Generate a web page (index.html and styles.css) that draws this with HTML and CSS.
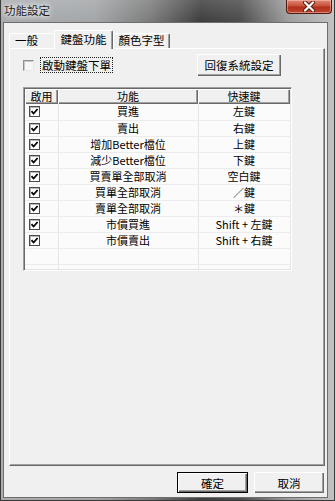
FILE: index.html
```html
<!DOCTYPE html>
<html lang="zh-Hant">
<head>
<meta charset="utf-8">
<title>功能設定</title>
<link rel="stylesheet" href="styles.css">
</head>
<body>
<div class="window">
  <div class="titlebar">
    <span class="title">功能設定</span>
    <button class="close" aria-label="close">
      <svg width="14" height="11" viewBox="0 0 14 11">
        <path d="M3 1.5 L11 9.5 M11 1.5 L3 9.5" stroke="#5a1a10" stroke-width="4" stroke-linecap="round"/>
        <path d="M3 1.5 L11 9.5 M11 1.5 L3 9.5" stroke="#ffffff" stroke-width="2.2" stroke-linecap="round"/>
      </svg>
    </button>
  </div>
  <div class="client">
    <div class="tabs">
      <div class="tab first">一般</div>
      <div class="tab active">鍵盤功能</div>
      <div class="tab">顏色字型</div>
    </div>
    <div class="panel">
      <div class="options">
        <span class="cb"></span>
        <span class="focus">啟動鍵盤下單</span>
        <button class="btn restore">回復系統設定</button>
      </div>
      <div class="list">
        <table class="grid">
          <colgroup><col class="c1"><col class="c2"><col class="c3"></colgroup>
          <thead>
            <tr><th>啟用</th><th>功能</th><th>快速鍵</th></tr>
          </thead>
          <tbody>
            <tr><td><span class="chk"></span></td><td>買進</td><td>左鍵</td></tr>
            <tr><td><span class="chk"></span></td><td>賣出</td><td>右鍵</td></tr>
            <tr><td><span class="chk"></span></td><td>增加Better檔位</td><td>上鍵</td></tr>
            <tr><td><span class="chk"></span></td><td>減少Better檔位</td><td>下鍵</td></tr>
            <tr><td><span class="chk"></span></td><td>買賣單全部取消</td><td>空白鍵</td></tr>
            <tr><td><span class="chk"></span></td><td>買單全部取消</td><td>／鍵</td></tr>
            <tr><td><span class="chk"></span></td><td>賣單全部取消</td><td>＊鍵</td></tr>
            <tr><td><span class="chk"></span></td><td>市價買進</td><td>Shift + 左鍵</td></tr>
            <tr><td><span class="chk"></span></td><td>市價賣出</td><td>Shift + 右鍵</td></tr>
            <tr class="empty"><td></td><td></td><td></td></tr>
            <tr class="empty"><td></td><td></td><td></td></tr>
          </tbody>
        </table>
      </div>
    </div>
    <div class="actions">
      <button class="btn default">確定</button>
      <button class="btn">取消</button>
    </div>
  </div>
</div>
</body>
</html>
```

FILE: styles.css
```css
html, body {
  margin: 0;
  padding: 0;
}
body {
  width: 335px;
  height: 501px;
  overflow: hidden;
  font-family: "Noto Sans CJK TC", "Liberation Sans", sans-serif;
  font-size: 11.5px;
  color: #000;
}
.window {
  width: 335px;
  height: 501px;
  box-sizing: border-box;
  display: flex;
  flex-direction: column;
  padding: 0 6px 2px 2px;
  border-left: 1px solid #3a3a3a;
  border-right: 1px solid #3a3a3a;
  border-bottom: 1px solid #3a3a3a;
  background:
    linear-gradient(180deg, rgba(255,255,255,0.15) 0, rgba(0,0,0,0) 22px),
    linear-gradient(90deg, #a9adb0 0, #a3a6a8 28%, #7b7b7b 45%, #3e3e3e 60%, #4c4c4c 72%, #9c9c9c 86%, #c2c2c2 100%);
}
.titlebar {
  height: 22px;
  flex: none;
  display: flex;
  align-items: flex-start;
  justify-content: space-between;
}
.title {
  margin: 3px 0 0 1px;
  line-height: 14px;
  color: #1e1e1e;
  text-shadow: 0 0 4px #fff, 0 0 6px #fff;
}
.close {
  width: 46px;
  height: 14px;
  margin: 0 -4px 0 0;
  padding: 0;
  border: 1px solid #4a1c14;
  border-top: none;
  border-radius: 0 0 4px 4px;
  background: linear-gradient(180deg, #e08a78 0, #c9503a 45%, #b0301c 55%, #c2452e 100%);
  box-shadow: inset 0 0 0 1px rgba(255,210,200,0.45);
  display: flex;
  align-items: center;
  justify-content: center;
}
.client {
  flex: 1;
  display: flex;
  flex-direction: column;
  background: #f0f0f0;
  border: 1px solid #6e6e6e;
  padding: 0 1px 4px 5px;
}
.tabs {
  display: flex;
  align-items: flex-end;
  height: 18px;
  margin-top: 7px;
  position: relative;
  z-index: 1;
}
.tab {
  box-sizing: border-box;
  height: 15px;
  line-height: 13px;
  text-align: center;
  border-top: 1px solid #fff;
  border-left: 1px solid #fff;
  border-right: 1px solid #696969;
  border-radius: 2px 2px 0 0;
  box-shadow: inset -1px 0 0 #a0a0a0;
  background: #f0f0f0;
  width: 57px;
}
.tab.first {
  width: 45px;
  text-align: left;
  padding-left: 5px;
  border-right: none;
  box-shadow: none;
}
.tab.active {
  width: 59px;
  height: 19px;
  line-height: 16px;
  margin-bottom: -1px;
  border-left: 1px solid #fff;
  padding-bottom: 1px;
}
.panel {
  flex: 1;
  box-sizing: border-box;
  margin-right: 1px;
  border-top: 1px solid #fff;
  border-left: 1px solid #fff;
  border-right: 1px solid #696969;
  border-bottom: 1px solid #696969;
  box-shadow: inset -1px -1px 0 #a0a0a0;
  padding: 5px 0 0 13px;
}
.options {
  display: flex;
  align-items: center;
  height: 22px;
}
.cb {
  width: 11px;
  height: 11px;
  box-sizing: border-box;
  background: #f6f6f6;
  border-top: 1px solid #8e8e8e;
  border-left: 1px solid #8e8e8e;
  border-right: 1px solid #e8e8e8;
  border-bottom: 1px solid #e8e8e8;
  box-shadow: inset 1px 1px 0 #c8c8c8;
}
.focus {
  margin-left: 6px;
  padding: 0 1px;
  line-height: 14px;
  border: 1px dotted #222;
}
.btn {
  font-family: inherit;
  font-size: 11.5px;
  color: #000;
  padding: 0;
  margin: 0;
  background: #f0f0f0;
  border: none;
  box-shadow: inset 1px 1px 0 #fff, inset -1px -1px 0 #696969, inset -2px -2px 0 #a0a0a0, inset 2px 2px 0 #f0f0f0;
  line-height: 16px;
}
.restore {
  width: 84px;
  height: 22px;
  margin-left: auto;
  margin-right: 43px;
}
.list {
  margin-top: 11px;
  width: 269px;
  height: 184px;
  box-sizing: border-box;
  overflow: hidden;
  background: #fbfbfb;
  border-top: 1px solid #a0a0a0;
  border-left: 1px solid #a0a0a0;
  border-right: 1px solid #fff;
  border-bottom: 1px solid #fff;
  box-shadow: inset 1px 1px 0 #696969, inset -1px -1px 0 #e3e3e3;
  padding: 1px 0 0 1px;
  font-size: 11px;
}
.grid {
  border-collapse: collapse;
  table-layout: fixed;
  width: 265px;
}
.c1 { width: 33px; }
.c2 { width: 140px; }
.c3 { width: 92px; }
.grid th {
  height: 15px;
  padding: 0;
  font-weight: normal;
  line-height: 15px;
  background: #f0f0f0;
  box-shadow: inset 1px 1px 0 #fff, inset -1px -1px 0 #696969, inset -2px -2px 0 #a0a0a0;
}
.grid td {
  height: 16px;
  padding: 0;
  line-height: 15px;
  text-align: center;
  border-right: 1px solid #e6e6e6;
  border-bottom: 1px solid #ececec;
  box-sizing: border-box;
}
.grid td:first-child {
  text-align: left;
  padding-left: 4px;
}
.chk {
  display: block;
  width: 11px;
  height: 11px;
  box-sizing: border-box;
  border: 1px solid #4b4b4b;
  background: #fff url("data:image/svg+xml,%3Csvg xmlns='http://www.w3.org/2000/svg' width='9' height='9' viewBox='0 0 9 9'%3E%3Cpath d='M1.5 4.2 L3.6 6.5 L7.6 2' fill='none' stroke='%23000' stroke-width='1.8'/%3E%3C/svg%3E") no-repeat center;
  box-shadow: inset 1px 1px 0 #b8b8b8;
}
.actions {
  display: flex;
  justify-content: flex-end;
  gap: 6px;
  margin-top: 6px;
  padding-right: 2px;
}
.actions .btn {
  width: 70px;
  height: 21px;
}
.actions .btn.default {
  width: 71px;
  box-shadow: inset 0 0 0 1px #000, inset 2px 2px 0 #fff, inset -2px -2px 0 #696969, inset -3px -3px 0 #a0a0a0;
}
```
